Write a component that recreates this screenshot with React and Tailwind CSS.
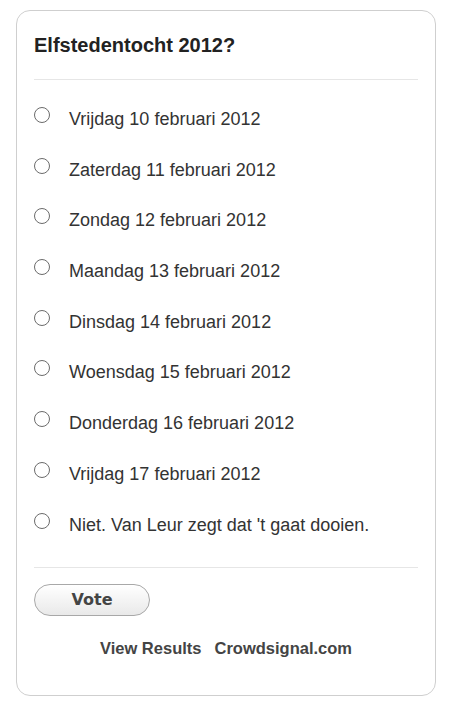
const options = [
  "Vrijdag 10 februari 2012",
  "Zaterdag 11 februari 2012",
  "Zondag 12 februari 2012",
  "Maandag 13 februari 2012",
  "Dinsdag 14 februari 2012",
  "Woensdag 15 februari 2012",
  "Donderdag 16 februari 2012",
  "Vrijdag 17 februari 2012",
  "Niet. Van Leur zegt dat 't gaat dooien.",
];

export default function App() {
  return (
    <div className="min-h-[711px] bg-white pl-[16px] pt-[10px] font-['Liberation_Sans',Arial,sans-serif]">
      <div className="box-border w-[420px] rounded-[14px] border border-[#cfcfcf] px-[17px] pb-[37px] pt-[22px]">
        <h1 className="text-[20px] font-bold leading-[24px] text-[#222]">Elfstedentocht 2012?</h1>
        <div className="mt-[22px] h-px bg-[#e6e6e6]" />

        <ul className="mt-[14px]">
          {options.map((label) => (
            <li key={label} className="flex h-[50.7px] items-start pt-[12px]">
              <span className="mt-[1px] box-border h-[16px] w-[16px] shrink-0 rounded-full border border-[#6b6b6b] bg-white" />
              <span className="ml-[19px] text-[18px] leading-[27px] text-[#333]">{label}</span>
            </li>
          ))}
        </ul>

        <div className="mt-[17px] h-px bg-[#e6e6e6]" />

        <button
          type="button"
          className="mt-[16px] box-border h-[32px] w-[116px] rounded-full border border-[#a8a8a8] bg-gradient-to-b from-white to-[#e9e9e9] font-['DejaVu_Sans',Verdana,sans-serif] text-[16px] font-bold text-[#444]"
        >
          Vote
        </button>

        <div className="mt-[22px] flex justify-center gap-[13px] text-[16.5px] font-bold leading-[20px] text-[#444]">
          <span>View Results</span>
          <span>Crowdsignal.com</span>
        </div>
      </div>
    </div>
  );
}
